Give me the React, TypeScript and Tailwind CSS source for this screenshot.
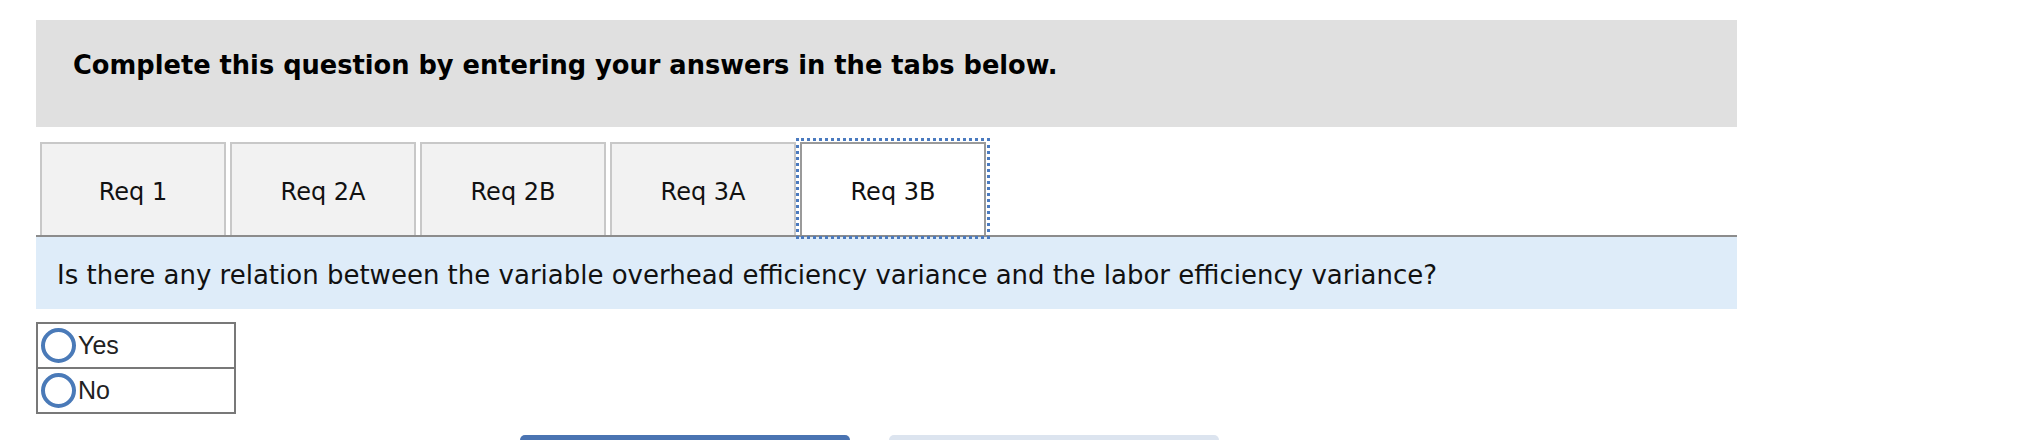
import React from "react";

const tabs = ["Req 1", "Req 2A", "Req 2B", "Req 3A", "Req 3B"];

export default function App() {
  return (
    <div className="w-[2022px] h-[440px] overflow-hidden bg-white" style={{ fontFamily: '"DejaVu Sans", Verdana, sans-serif' }}>
      <div className="ml-[36px] w-[1701px] pt-[20px]">
        <div className="h-[107px] bg-[#e0e0e0] pl-[37px] pt-[30px]">
          <p className="text-[25.7px] leading-[30px] font-bold text-black">
            Complete this question by entering your answers in the tabs below.
          </p>
        </div>

        <div className="mt-[15px] flex gap-[4px] pl-[4px] border-b-2 border-[#8c8c8c]">
          {tabs.map((t, i) => {
            const active = i === tabs.length - 1;
            return (
              <div
                key={t}
                className={
                  active
                    ? "w-[186px] h-[93px] flex items-center justify-center pt-[4px] border-2 border-b-0 border-[#9a9a9a] bg-white text-[24px] text-[#111] outline-[3px] outline-dotted outline-[#4a7abf] outline-offset-[1px]"
                    : "w-[186px] h-[93px] flex items-center justify-center pt-[4px] border-2 border-b-0 border-[#c8c8c8] bg-[#f2f2f2] text-[24px] text-[#111]"
                }
              >
                {t}
              </div>
            );
          })}
        </div>

        <div className="h-[72px] bg-[#deecf9] pl-[21px] pt-[23px]">
          <p className="text-[26px] leading-[30px] text-[#111]">
            Is there any relation between the variable overhead efficiency variance and the labor efficiency variance?
          </p>
        </div>

        <div
          className="mt-[13px] w-[200px] border-2 border-[#787878]"
          style={{ fontFamily: '"Liberation Sans", Arial, sans-serif' }}
        >
          {["Yes", "No"].map((o, i) => (
            <label
              key={o}
              className={
                i === 0
                  ? "h-[45px] flex items-center pl-[3px] gap-[2px] border-b-2 border-[#787878]"
                  : "h-[43px] flex items-center pl-[3px] gap-[2px]"
              }
            >
              <span className="w-[35px] h-[35px] rounded-full border-[4px] border-[#4a7ab8] bg-white" />
              <span className="text-[25px] leading-none text-[#222]">{o}</span>
            </label>
          ))}
        </div>

        <div className="mt-[21px] flex pl-[484px] gap-[39px]">
          <div className="w-[330px] h-[20px] rounded-t-[5px] bg-[#4a74b2]" />
          <div className="w-[330px] h-[20px] rounded-t-[5px] bg-[#dce4ef]" />
        </div>
      </div>
    </div>
  );
}
